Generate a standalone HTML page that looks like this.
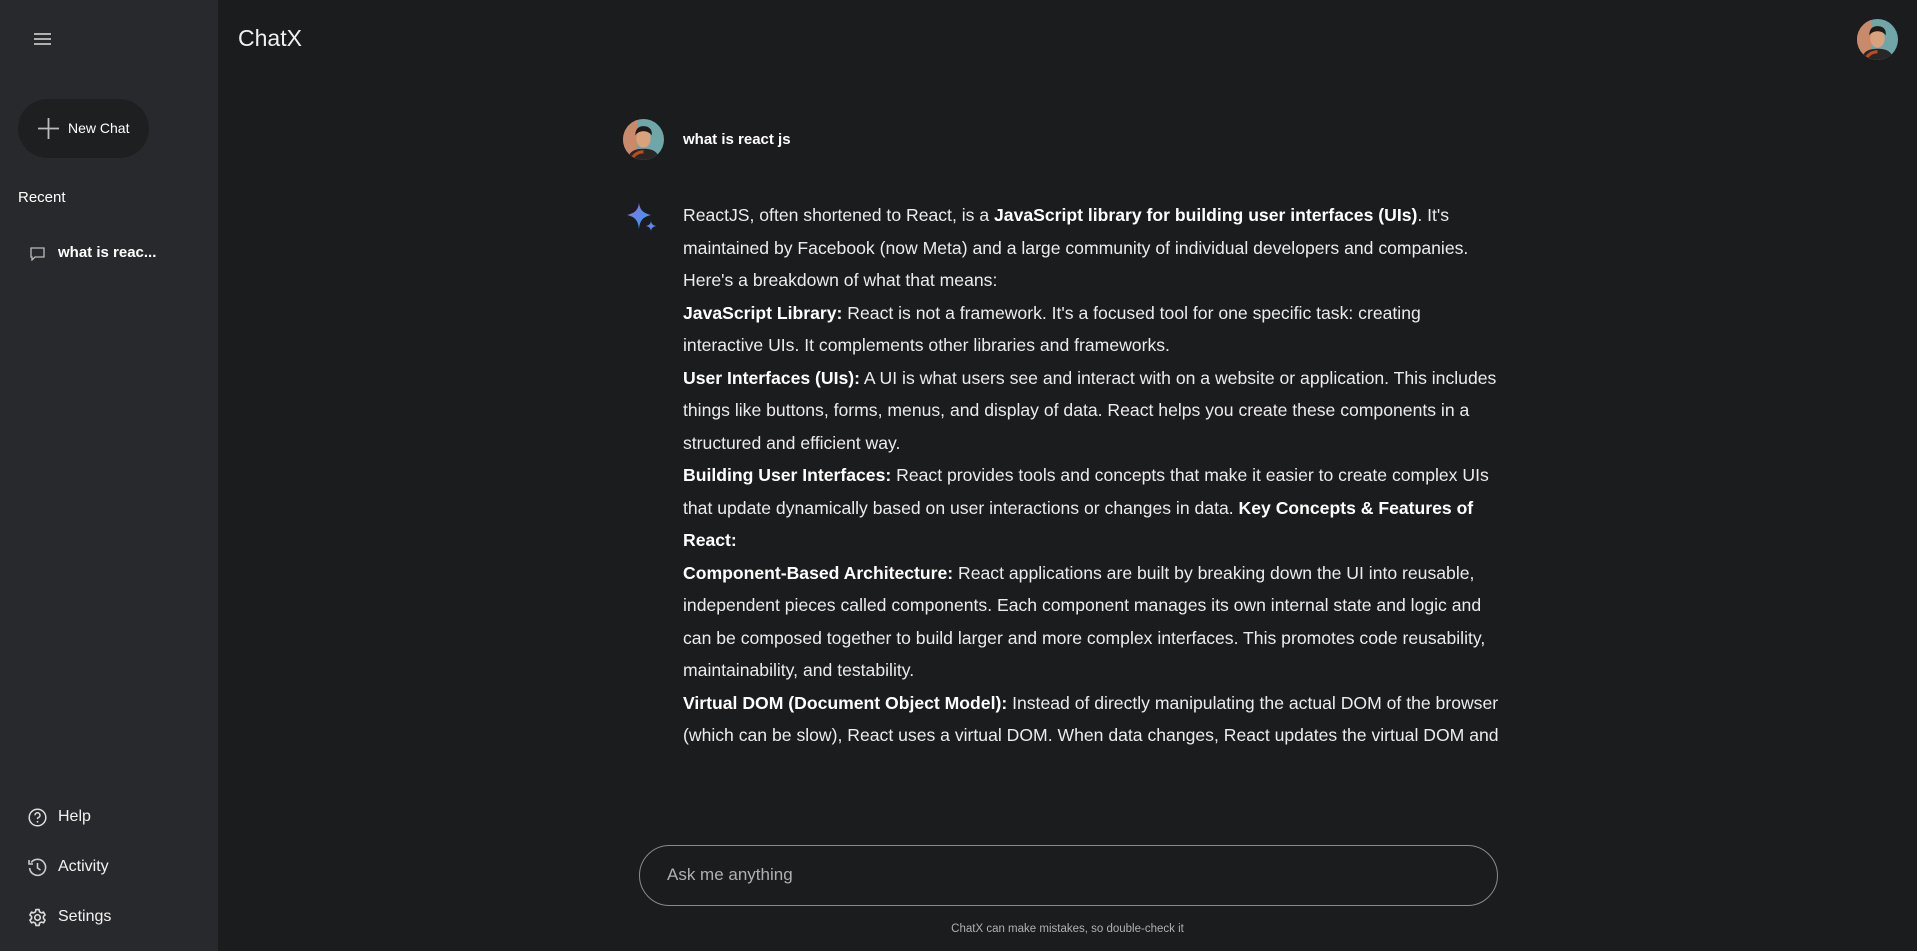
<!DOCTYPE html>
<html><head><meta charset="utf-8"><style>
*{margin:0;padding:0;box-sizing:border-box}
body{width:1917px;height:951px;overflow:hidden;background:#1b1c1e;font-family:"Liberation Sans",sans-serif;color:#ececec;position:relative}
.side{position:absolute;left:0;top:0;width:218px;height:951px;background:#28292c}
.abs{position:absolute}
.nc{left:18px;top:99px;width:131px;height:59px;border-radius:30px;background:#1e1f21;font-size:14px;color:#fff}
.item{font-size:16px;color:#f2f2f2;display:flex;align-items:center}
.resp{position:absolute;left:683px;top:199px;font-size:17.6px;line-height:32.5px;color:#ececec;letter-spacing:0}
.resp div{white-space:nowrap}
b{font-weight:bold;color:#fff}
</style></head><body>
<div class="side"></div>
<svg class="abs" style="left:34px;top:33px" width="18" height="12"><path d="M0 1h17M0 6h17M0 11h17" stroke="#ddd" stroke-width="1.6"/></svg>
<div class="abs" style="left:238px;top:25px;font-size:23px;color:#f0f0f0">ChatX</div>
<div class="abs nc"><svg class="abs" style="left:20px;top:19px" width="21" height="21"><path d="M10.5 0v21M0 10.5h21" stroke="#bbb" stroke-width="1.8"/></svg><span class="abs" style="left:50px;top:21px">New Chat</span></div>
<div class="abs" style="left:18px;top:189px;font-size:15px;color:#fff">Recent</div>
<svg class="abs" style="left:30px;top:247px" width="15" height="14"><path d="M1 1h13v9H5l-3 3v-3H1z" fill="none" stroke="#bbb" stroke-width="1.3"/></svg>
<div class="abs" style="left:58px;top:244px;font-size:15px;font-weight:bold;color:#fff">what is reac...</div>

<svg class="abs" style="left:28px;top:808px" width="19" height="19"><circle cx="9.5" cy="9.5" r="8.3" fill="none" stroke="#ddd" stroke-width="1.5"/><path d="M7 7.3a2.5 2.5 0 1 1 3.3 2.3c-.7.3-.8.7-.8 1.5" fill="none" stroke="#ddd" stroke-width="1.5"/><circle cx="9.5" cy="13.8" r=".9" fill="#ddd"/></svg>
<div class="abs item" style="left:58px;top:808px">Help</div>
<svg class="abs" style="left:28px;top:858px" width="19" height="19"><path d="M3.2 4.5A8 8 0 1 1 1.6 10" fill="none" stroke="#ccc" stroke-width="1.6"/><path d="M1 2v4h4" fill="none" stroke="#ccc" stroke-width="1.6"/><path d="M9.5 5v5l3 2" fill="none" stroke="#ccc" stroke-width="1.6"/></svg>
<div class="abs item" style="left:58px;top:858px">Activity</div>
<svg class="abs" style="left:28px;top:908px" width="19" height="19" viewBox="0 0 24 24"><path d="M12 15.5a3.5 3.5 0 1 0 0-7 3.5 3.5 0 0 0 0 7z" fill="none" stroke="#ddd" stroke-width="2"/><path d="M10 2h4l.6 2.8 2.3 1.3 2.7-.9 2 3.5-2.1 1.9v2.7l2.1 1.9-2 3.5-2.7-.9-2.3 1.3L14 22h-4l-.6-2.8-2.3-1.3-2.7.9-2-3.5 2.1-1.9v-2.7L2.4 8.7l2-3.5 2.7.9 2.3-1.3z" fill="none" stroke="#ddd" stroke-width="2" stroke-linejoin="round"/></svg>
<div class="abs item" style="left:58px;top:908px">Setings</div>

<svg class="abs" style="left:1857px;top:19px" width="41" height="41" viewBox="0 0 40 40"><defs><clipPath id="c1"><circle cx="20" cy="20" r="20"/></clipPath></defs><g clip-path="url(#c1)"><rect width="40" height="40" fill="#6fa7a8"/><rect x="0" y="0" width="14" height="40" fill="#c88a6a"/><path d="M4 40c2-9 8-11 16-11s14 2 16 11z" fill="#2a2626"/><path d="M8 40c3-6 7-8 12-8" stroke="#c4491f" stroke-width="3" fill="none"/><ellipse cx="20" cy="19" rx="7" ry="9" fill="#d9a27d"/><path d="M12 16c0-7 4-9 8-9s9 2 8 9c-2-3-5-4-8-4s-6 1-8 4z" fill="#1e1a1a"/></g></svg>

<svg class="abs" style="left:623px;top:119px" width="41" height="41" viewBox="0 0 40 40"><defs><clipPath id="c2"><circle cx="20" cy="20" r="20"/></clipPath></defs><g clip-path="url(#c2)"><rect width="40" height="40" fill="#6fa7a8"/><rect x="0" y="0" width="14" height="40" fill="#c88a6a"/><path d="M4 40c2-9 8-11 16-11s14 2 16 11z" fill="#2a2626"/><path d="M8 40c3-6 7-8 12-8" stroke="#c4491f" stroke-width="3" fill="none"/><ellipse cx="20" cy="19" rx="7" ry="9" fill="#d9a27d"/><path d="M12 16c0-7 4-9 8-9s9 2 8 9c-2-3-5-4-8-4s-6 1-8 4z" fill="#1e1a1a"/></g></svg>
<div class="abs" style="left:683px;top:131px;font-size:15px;font-weight:bold;color:#fff">what is react js</div>

<svg class="abs" style="left:626px;top:202px" width="32" height="32" viewBox="0 0 32 32"><defs><linearGradient id="g" x1="0" y1="0" x2="1" y2="1"><stop offset="0" stop-color="#9b72cb"/><stop offset=".6" stop-color="#4f8ef0"/><stop offset="1" stop-color="#6aa5f5"/></linearGradient></defs><path d="M13 1C14 8 17 11 25 13 17 15 14 18 13 27 12 18 9 15 1 13 9 11 12 8 13 1z" fill="url(#g)"/><path d="M25 19c.5 3 1.5 4 5 5-3.5 1-4.5 2-5 5-.5-3-1.5-4-5-5 3.5-1 4.5-2 5-5z" fill="url(#g)"/></svg>

<div class="resp">
<div>ReactJS, often shortened to React, is a <b>JavaScript library for building user interfaces (UIs)</b>. It's</div>
<div>maintained by Facebook (now Meta) and a large community of individual developers and companies.</div>
<div>Here's a breakdown of what that means:</div>
<div><b>JavaScript Library:</b> React is not a framework. It's a focused tool for one specific task: creating</div>
<div>interactive UIs. It complements other libraries and frameworks.</div>
<div><b>User Interfaces (UIs):</b> A UI is what users see and interact with on a website or application. This includes</div>
<div>things like buttons, forms, menus, and display of data. React helps you create these components in a</div>
<div>structured and efficient way.</div>
<div><b>Building User Interfaces:</b> React provides tools and concepts that make it easier to create complex UIs</div>
<div>that update dynamically based on user interactions or changes in data. <b>Key Concepts &amp; Features of</b></div>
<div><b>React:</b></div>
<div><b>Component-Based Architecture:</b> React applications are built by breaking down the UI into reusable,</div>
<div>independent pieces called components. Each component manages its own internal state and logic and</div>
<div>can be composed together to build larger and more complex interfaces. This promotes code reusability,</div>
<div>maintainability, and testability.</div>
<div><b>Virtual DOM (Document Object Model):</b> Instead of directly manipulating the actual DOM of the browser</div>
<div>(which can be slow), React uses a virtual DOM. When data changes, React updates the virtual DOM and</div>
</div>

<div class="abs" style="left:639px;top:845px;width:859px;height:61px;border:1px solid #8a8a8a;border-radius:31px;background:#1b1c1e"></div>
<div class="abs" style="left:667px;top:865px;font-size:17px;color:#b0b0b0">Ask me anything</div>
<div class="abs" style="left:218px;width:1699px;top:923px;text-align:center;font-size:11.5px;color:#b0b0b0">ChatX can make mistakes, so double-check it</div>
</body></html>
